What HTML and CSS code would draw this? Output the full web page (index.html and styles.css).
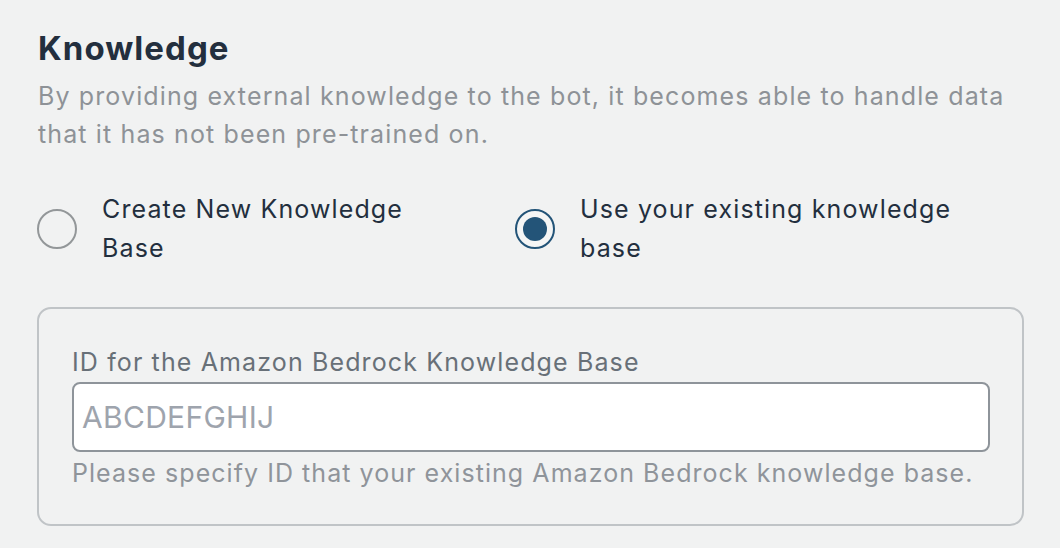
FILE: index.html
```html
<!DOCTYPE html>
<html lang="en">
<head>
<meta charset="utf-8">
<link rel="stylesheet" href="styles.css">
</head>
<body>
<section class="knowledge">
  <h2 class="title">Knowledge</h2>
  <p class="desc">By providing external knowledge to the bot, it becomes able to handle data that it has not been pre-trained on.</p>
  <div class="radios">
    <label class="radio-item item-create">
      <span class="radio"></span>
      <span class="radio-label">Create New Knowledge Base</span>
    </label>
    <label class="radio-item item-existing">
      <span class="radio checked"><span class="dot"></span></span>
      <span class="radio-label">Use your existing knowledge base</span>
    </label>
  </div>
  <div class="panel">
    <div class="field-label">ID for the Amazon Bedrock Knowledge Base</div>
    <div class="input"><span class="placeholder">ABCDEFGHIJ</span></div>
    <div class="hint">Please specify ID that your existing Amazon Bedrock knowledge base.</div>
  </div>
</section>
</body>
</html>
```

FILE: styles.css
```css
html, body {
  margin: 0;
  padding: 0;
  background: #f1f2f2;
}
body {
  font-family: Inter, "Noto Sans", sans-serif;
  width: 1060px;
  height: 548px;
  overflow: hidden;
}
.knowledge {
  padding: 28px 36px 0 37px;
}
.title {
  margin: 0;
  font-size: 33px;
  line-height: 40px;
  font-weight: 700;
  letter-spacing: 0.032em;
  color: #232f3e;
  padding-left: 1px;
}
.desc {
  margin: 9px 0 0 1px;
  font-size: 25px;
  line-height: 38px;
  letter-spacing: 0.045em;
  color: #8e9297;
}
.radios {
  margin-top: 37px;
  display: grid;
  grid-template-columns: 420px 460px;
  column-gap: 58px;
}
.radio-item {
  display: flex;
  align-items: center;
  gap: 25px;
}
.radio {
  flex: none;
  width: 40px;
  height: 40px;
  box-sizing: border-box;
  border: 2px solid #939799;
  border-radius: 50%;
  display: flex;
  align-items: center;
  justify-content: center;
}
.radio.checked {
  border-color: #235478;
  background: #f4f5f5;
}
.dot {
  width: 24px;
  height: 24px;
  border-radius: 50%;
  background: #235478;
}
.radio-label {
  font-size: 25px;
  line-height: 39px;
  letter-spacing: 0.045em;
  color: #232f3e;
}
.panel {
  margin-top: 39px;
  border: 2px solid #c0c4c7;
  border-radius: 14px;
  padding: 35px 32px 33px 33px;
}
.field-label {
  font-size: 25px;
  line-height: 36px;
  letter-spacing: 0.045em;
  color: #687078;
}
.input {
  margin-top: 2px;
  height: 70px;
  box-sizing: border-box;
  border: 2px solid #8e949a;
  border-radius: 8px;
  background: #ffffff;
  padding: 0 8px;
  display: flex;
  align-items: center;
}
.placeholder {
  font-size: 30px;
  letter-spacing: 0.01em;
  color: #9ea4ad;
}
.hint {
  margin-top: 3px;
  font-size: 25px;
  line-height: 36px;
  letter-spacing: 0.042em;
  color: #8f949a;
}
```
